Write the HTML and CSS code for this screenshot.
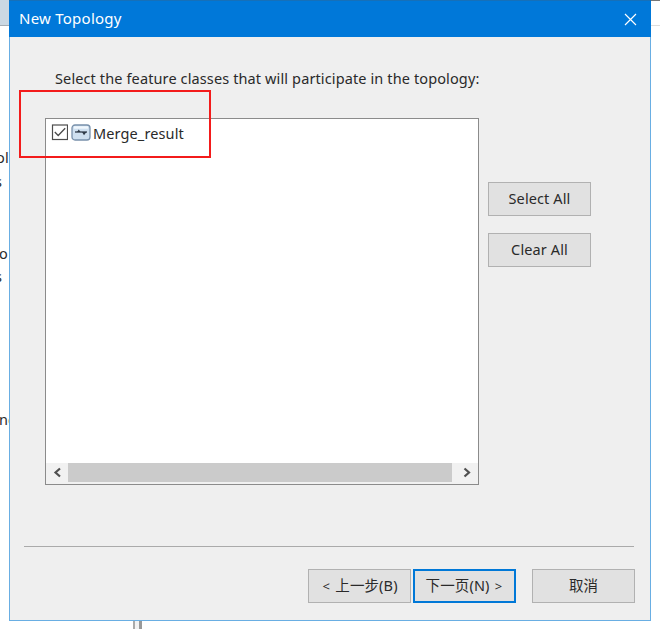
FILE: index.html
```html
<!DOCTYPE html>
<html lang="zh-CN">
<head>
<meta charset="utf-8">
<title>New Topology</title>
<link rel="stylesheet" href="styles.css">
</head>
<body>
<div class="desktop">
  <div class="backdrop-toolbar"></div>
  <div class="backdrop-right"></div>
  <span class="fragment frag-a">ol</span>
  <span class="fragment frag-b">s</span>
  <span class="fragment frag-c">o</span>
  <span class="fragment frag-d">s</span>
  <span class="fragment frag-e">ng</span>
  <div class="splitter"></div>

  <section class="dialog">
    <header class="titlebar">
      <span class="title">New Topology</span>
      <svg class="close" width="13" height="13" viewBox="0 0 13 13"><path d="M1 1L12 12M12 1L1 12" fill="none" stroke="#fff" stroke-width="1.15"/></svg>
    </header>
    <main class="content">
      <p class="prompt">Select the feature classes that will participate in the topology:</p>
      <div class="columns">
        <div class="list">
          <div class="item">
            <svg class="check" width="17" height="17" viewBox="0 0 17 17"><rect x="1.5" y="1" width="15" height="14.5" fill="#fff" stroke="#4c4c4c" stroke-width="1.2"/><path d="M3.8 8L7.2 11.5L14.2 4.3" fill="none" stroke="#4a4a4a" stroke-width="1.3"/></svg>
            <svg class="feature" width="20" height="17" viewBox="0 0 20 17"><rect x="1" y="1" width="18" height="15" rx="3" fill="#cfe0f0" stroke="#7890aa" stroke-width="1.3"/><path d="M3 3.5H17" stroke="#f0f7fd" stroke-width="2.4"/><path d="M4 8H16" fill="none" stroke="#303c49" stroke-width="1.3"/><path d="M6 8L7.8 5.5L9.5 8ZM11 8H15.5L13 11.3Z" fill="#303c49"/></svg>
            <span class="item-name">Merge_result</span>
          </div>
          <div class="scrollbar">
            <svg class="arrow" width="22" height="19" viewBox="0 0 22 19"><path d="M14 5.5L9.5 9.5L14 13.5" fill="none" stroke="#505050" stroke-width="2.2"/></svg>
            <div class="thumb"></div>
            <svg class="arrow" width="26" height="19" viewBox="0 0 26 19"><path d="M12.5 5.5L17 9.5L12.5 13.5" fill="none" stroke="#505050" stroke-width="2.2"/></svg>
          </div>
        </div>
        <div class="side">
          <button class="btn">Select All</button>
          <button class="btn">Clear All</button>
        </div>
      </div>
    </main>
    <footer class="footer">
      <button class="btn"><span class="angle">&lt;</span> 上一步(B)</button>
      <button class="btn primary">下一页(N) <span class="angle">&gt;</span></button>
      <button class="btn cancel">取消</button>
    </footer>
  </section>
  <div class="highlight"></div>
</div>
</body>
</html>
```
FILE: styles.css
```css
* { box-sizing: border-box; }

body {
  margin: 0;
  font-family: "Noto Sans", "Noto Sans CJK SC", sans-serif;
  font-size: 14.5px;
  letter-spacing: 0.12px;
  color: #2a2a2a;
}

.desktop {
  position: relative;
  width: 660px;
  height: 629px;
  overflow: hidden;
  background: #fff;
}

.backdrop-toolbar {
  position: absolute;
  left: 0;
  top: 0;
  width: 9px;
  height: 26px;
  background: #cbd8e3;
  border-bottom: 1px solid #a5adb5;
}

.backdrop-right {
  position: absolute;
  left: 651px;
  top: 0;
  width: 9px;
  height: 26px;
  border-top: 1px solid #777;
  border-bottom: 1px solid #ddd;
}

.fragment {
  position: absolute;
  line-height: 20px;
}

.frag-a { left: -4px; top: 147px; }
.frag-b { left: -5px; top: 171px; }
.frag-c { left: -1px; top: 243px; }
.frag-d { left: -5px; top: 266px; }
.frag-e { left: -1px; top: 409px; }

.splitter {
  position: absolute;
  left: 133px;
  top: 620px;
  width: 9px;
  height: 9px;
  border-left: 2px solid #aaa;
  border-right: 3px solid #999;
  background: #f2f2f2;
}

.dialog {
  position: absolute;
  left: 9px;
  top: 0;
  width: 642px;
  height: 621px;
  display: flex;
  flex-direction: column;
  background: #efefef;
  border: 1px solid #69aee3;
  border-top: 0;
}

.titlebar {
  height: 37px;
  margin: 0 -1px;
  padding: 0 14px 0 10px;
  display: flex;
  align-items: center;
  justify-content: space-between;
  background: #0078d9;
  border-top: 1px solid #1670b9;
  color: #fff;
}

.title {
  padding-bottom: 2px;
  font-size: 15px;
  letter-spacing: 0.25px;
}

.close { display: block; }

.content { flex: 1; padding: 29px 0 0 35px; }

.prompt {
  height: 24px;
  margin: 0 0 28px 10px;
  line-height: 24px;
  white-space: nowrap;
}

.columns { display: flex; gap: 9px; }

.list {
  width: 434px;
  height: 367px;
  display: flex;
  flex-direction: column;
  justify-content: space-between;
  background: #fff;
  border: 1px solid #8b8b8b;
}

.item {
  display: flex;
  align-items: center;
  height: 26px;
  padding-left: 5px;
}

.feature { margin-left: 3px; }
.item-name { margin: 1px 0 0 2px; }

.scrollbar {
  display: flex;
  height: 21px;
  padding-bottom: 2px;
  background: #f1f1f1;
}

.thumb { flex: 1; background: #cbcbcb; }

.side {
  display: flex;
  flex-direction: column;
  gap: 17px;
  padding-top: 64px;
}

.btn {
  width: 103px;
  height: 34px;
  padding: 0 0 2px;
  border: 1px solid #b1b1b1;
  background: #e1e1e1;
  color: #2a2a2a;
  font: inherit;
  letter-spacing: inherit;
  white-space: nowrap;
}

.angle {
  display: inline-block;
  width: 10px;
  font-size: 13px;
}

.footer {
  display: flex;
  justify-content: flex-end;
  gap: 2px;
  height: 74px;
  margin: 0 16px 0 14px;
  padding-top: 22px;
  border-top: 1px solid #aaa;
}

.footer .btn { padding-bottom: 4px; }
.footer .primary { border: 2px solid #0078d7; }
.footer .cancel { margin: 0 -1px 0 14px; }

.highlight {
  position: absolute;
  left: 19px;
  top: 90px;
  width: 192px;
  height: 68px;
  border: 2px solid #f31b1b;
}
```
